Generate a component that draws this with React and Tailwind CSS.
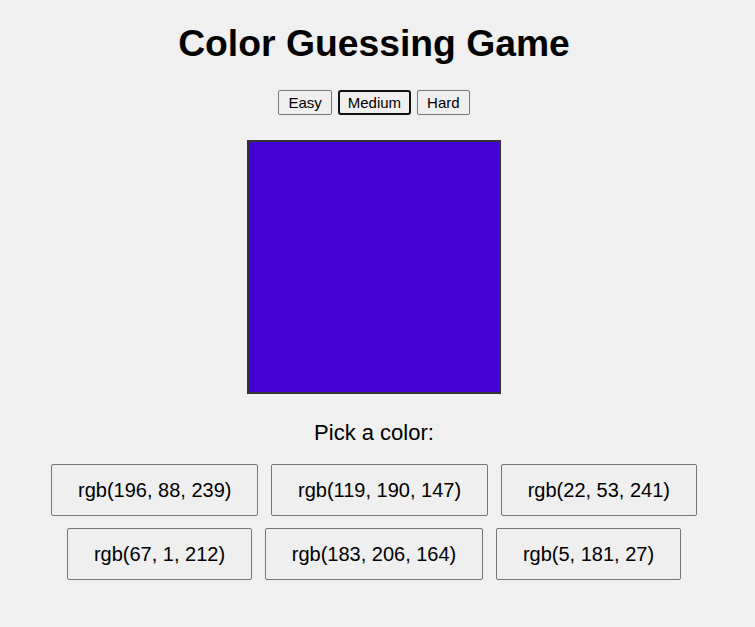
import { useState } from "react";

const levels = ["Easy", "Medium", "Hard"];

const options = [
  "rgb(196, 88, 239)",
  "rgb(119, 190, 147)",
  "rgb(22, 53, 241)",
  "rgb(67, 1, 212)",
  "rgb(183, 206, 164)",
  "rgb(5, 181, 27)",
];

export default function App() {
  const [level, setLevel] = useState("Medium");
  const target = "rgb(67, 1, 212)";

  return (
    <div className="min-h-screen bg-[#f0f0f0] text-black font-['Liberation_Sans',Arial,sans-serif]">
      <div className="w-[748px] flex flex-col items-center">
        <h1 className="mt-[22px] text-[37.3px] leading-[43px] font-bold">Color Guessing Game</h1>

        <div className="mt-[25px] flex gap-[6px]">
          {levels.map((l) =>
            l === level ? (
              <button
                key={l}
                onClick={() => setLevel(l)}
                className="px-[8px] py-[2px] text-[15px] leading-[17px] bg-[#efefef] border-2 border-[#101010] rounded-[3px]"
              >
                {l}
              </button>
            ) : (
              <button
                key={l}
                onClick={() => setLevel(l)}
                className="px-[9px] py-[3px] text-[15px] leading-[17px] bg-[#efefef] border border-[#767676] rounded-[2px]"
              >
                {l}
              </button>
            )
          )}
        </div>

        <div className="mt-[25px] w-[254px] h-[254px] border-2 border-[#333333]" style={{ backgroundColor: target }} />

        <p className="mt-[26px] text-[22px] leading-[26px]">Pick a color:</p>

        <div className="mt-[18px] max-w-[710px] flex flex-wrap justify-center gap-x-[12.6px] gap-y-[12px]">
          {options.map((c) => (
            <button
              key={c}
              className="px-[26px] py-[13px] text-[20px] leading-[24px] bg-[#efefef] border border-[#767676] rounded-[2px]"
            >
              {c}
            </button>
          ))}
        </div>
      </div>
    </div>
  );
}
